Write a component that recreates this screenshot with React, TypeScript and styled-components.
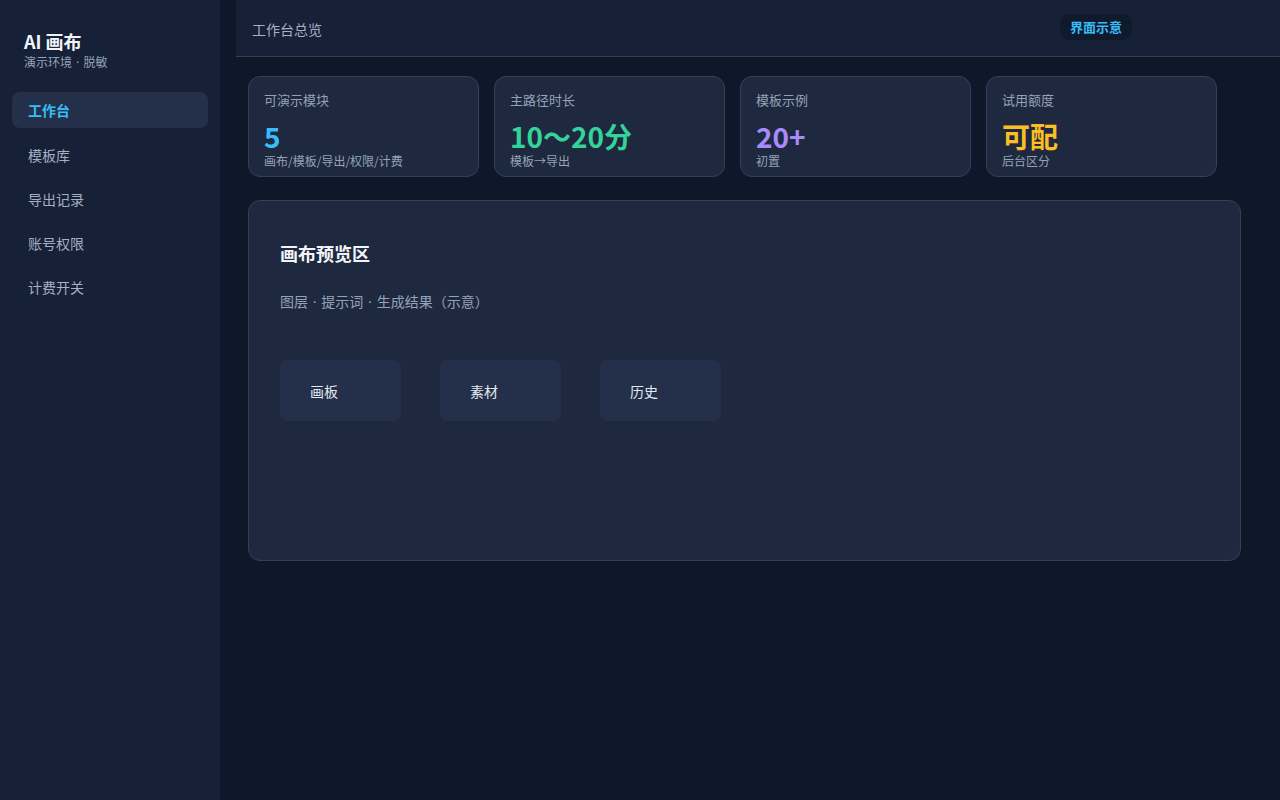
import * as React from "react";
import styled, { createGlobalStyle } from "styled-components";

const GlobalStyle = createGlobalStyle`
  html, body {
    margin: 0;
    padding: 0;
    background: #0f172a;
    font-family: "Noto Sans CJK SC", "Noto Sans", sans-serif;
  }
  * { box-sizing: border-box; }
`;

const Shell = styled.div`
  display: flex;
  width: 1280px;
  height: 800px;
  background: #0f172a;
  overflow: hidden;
`;

const Sidebar = styled.aside`
  width: 220px;
  flex-shrink: 0;
  background: #162036;
  padding: 28px 12px 0;
`;

const Brand = styled.div`
  padding: 0 12px;
  margin-bottom: 21px;
`;

const BrandTitle = styled.div`
  font-size: 18px;
  font-weight: 700;
  color: #f1f5f9;
  line-height: 26px;
`;

const BrandSub = styled.div`
  font-size: 12px;
  color: #94a3b8;
  line-height: 16px;
`;

const Sep = styled.span`
  font-family: "DejaVu Sans", sans-serif;
`;

const Nav = styled.nav`
  display: flex;
  flex-direction: column;
  gap: 8px;
`;

const NavItem = styled.div<{ $active?: boolean }>`
  height: 36px;
  display: flex;
  align-items: center;
  padding: 0 16px;
  border-radius: 8px;
  font-size: 14px;
  font-weight: ${(p) => (p.$active ? 700 : 400)};
  color: ${(p) => (p.$active ? "#38bdf8" : "#a5b0c2")};
  background: ${(p) => (p.$active ? "#243049" : "transparent")};

  &:first-child {
    margin-bottom: 1px;
  }
`;

const Main = styled.main`
  flex: 1;
  margin-left: 16px;
  display: flex;
  flex-direction: column;
`;

const Header = styled.header`
  height: 57px;
  flex-shrink: 0;
  background: #162036;
  border-bottom: 1px solid #334155;
  display: flex;
  align-items: center;
  padding: 0 16px;
`;

const HeaderTitle = styled.div`
  font-size: 14px;
  color: #a5b0c2;
  padding-top: 2px;
`;

const Badge = styled.div`
  margin-left: 738px;
  margin-top: -3px;
  height: 26px;
  padding: 0 10px;
  display: flex;
  align-items: center;
  border-radius: 10px;
  background: #0f1a2c;
  color: #38bdf8;
  font-size: 13px;
  font-weight: 700;
`;

const Content = styled.div`
  padding: 19px 12px 0;
  display: flex;
  flex-direction: column;
  gap: 23px;
`;

const Stats = styled.div`
  display: grid;
  grid-template-columns: repeat(4, 231px);
  gap: 15px;
`;

const StatCard = styled.div`
  height: 101px;
  background: #1e293f;
  border: 1px solid #334159;
  border-radius: 12px;
  padding: 13px 15px 0;
  display: flex;
  flex-direction: column;
`;

const StatLabel = styled.div`
  font-size: 13px;
  color: #94a3b8;
  line-height: 20px;
`;

const StatValue = styled.div<{ $color: string }>`
  margin-top: 12px;
  font-size: 28px;
  font-weight: 700;
  line-height: 28px;
  color: ${(p) => p.$color};
`;

const StatSub = styled.div`
  font-size: 12px;
  color: #94a3b8;
  line-height: 16px;
  margin-top: 3px;
`;

const Panel = styled.section`
  width: 993px;
  height: 361px;
  background: #1e293f;
  border: 1px solid #334159;
  border-radius: 12px;
  padding: 39px 31px 0;
`;

const PanelTitle = styled.h2`
  margin: 0;
  font-size: 18px;
  font-weight: 700;
  color: #f1f5f9;
  line-height: 26px;
`;

const PanelSub = styled.p`
  margin: 25px 0 0;
  font-size: 14px;
  color: #94a3b8;
  line-height: 20px;
`;

const Tiles = styled.div`
  display: flex;
  gap: 39px;
  margin-top: 48px;
`;

const Tile = styled.div`
  width: 121px;
  height: 61px;
  border-radius: 8px;
  background: #243049;
  display: flex;
  align-items: center;
  padding-left: 30px;
  font-size: 14px;
  color: #e2e8f0;
`;

const stats = [
  { label: "可演示模块", value: "5", color: "#38bdf8", sub: "画布/模板/导出/权限/计费" },
  { label: "主路径时长", value: "10～20分", color: "#34d399", sub: "模板→导出" },
  { label: "模板示例", value: "20+", color: "#a78bfa", sub: "初置" },
  { label: "试用额度", value: "可配", color: "#fbbf24", sub: "后台区分" },
];

const navItems = ["工作台", "模板库", "导出记录", "账号权限", "计费开关"];

export default function App() {
  return (
    <>
      <GlobalStyle />
      <Shell>
        <Sidebar>
          <Brand>
            <BrandTitle>AI 画布</BrandTitle>
            <BrandSub>
              演示环境<Sep> · </Sep>脱敏
            </BrandSub>
          </Brand>
          <Nav>
            {navItems.map((n, i) => (
              <NavItem key={n} $active={i === 0}>
                {n}
              </NavItem>
            ))}
          </Nav>
        </Sidebar>
        <Main>
          <Header>
            <HeaderTitle>工作台总览</HeaderTitle>
            <Badge>界面示意</Badge>
          </Header>
          <Content>
            <Stats>
              {stats.map((s) => (
                <StatCard key={s.label}>
                  <StatLabel>{s.label}</StatLabel>
                  <StatValue $color={s.color}>{s.value}</StatValue>
                  <StatSub>{s.sub}</StatSub>
                </StatCard>
              ))}
            </Stats>
            <Panel>
              <PanelTitle>画布预览区</PanelTitle>
              <PanelSub>
                图层<Sep> · </Sep>提示词<Sep> · </Sep>生成结果（示意）
              </PanelSub>
              <Tiles>
                <Tile>画板</Tile>
                <Tile>素材</Tile>
                <Tile>历史</Tile>
              </Tiles>
            </Panel>
          </Content>
        </Main>
      </Shell>
    </>
  );
}
